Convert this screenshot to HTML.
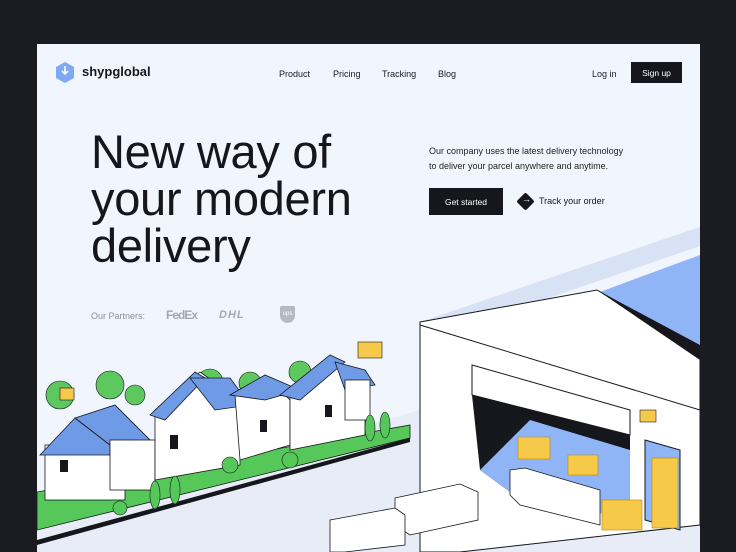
<!DOCTYPE html>
<html><head><meta charset="utf-8"><style>
*{margin:0;padding:0;box-sizing:border-box}
body{width:736px;height:552px;background:#1b1c21;overflow:hidden;font-family:"Liberation Sans",sans-serif;position:relative}
.page{position:absolute;left:37px;top:44px;width:663px;height:508px;background:#f1f5fd;overflow:hidden}
.abs{position:absolute}
.nav a{position:absolute;top:25px;font-size:9px;color:#1a1b20}
h1{position:absolute;left:54px;top:84px;font-size:47px;line-height:47px;font-weight:400;color:#16171c;letter-spacing:-0.3px}
.btn{position:absolute;background:#16171c;color:#fff;font-size:8.5px;display:flex;align-items:center;justify-content:center}
</style></head><body>
<div class="page">
<svg class="abs" style="left:18px;top:18px" width="20" height="22" viewBox="0 0 20 22"><polygon points="10,0 19,5 19,16 10,21 1,16 1,5" fill="#7fa9f4"/><path d="M10 4v8M7 9l3 3 3-3" stroke="#fff" stroke-width="1.6" fill="none"/></svg>
<div class="abs" style="left:45px;top:20px;font-size:13px;font-weight:600;color:#16171c">shypglobal</div>
<div class="nav"><a style="left:242px">Product</a><a style="left:296px">Pricing</a><a style="left:345px">Tracking</a><a style="left:401px">Blog</a><a style="left:555px">Log in</a></div>
<div class="btn" style="left:594px;top:18px;width:51px;height:21px">Sign up</div>
<h1>New way of<br>your modern<br>delivery</h1>
<div class="abs" style="left:392px;top:100px;font-size:9px;line-height:15px;color:#222">Our company uses the latest delivery technology<br>to deliver your parcel anywhere and anytime.</div>
<div class="btn" style="left:392px;top:144px;width:74px;height:27px">Get started</div>
<div class="abs" style="left:482px;top:151px;width:13px;height:13px;background:#16171c;transform:rotate(45deg);border-radius:2px"></div>
<div class="abs" style="left:485px;top:150px;color:#fff;font-size:9px">→</div>
<div class="abs" style="left:502px;top:152px;font-size:9px;color:#16171c">Track your order</div>
<div class="abs" style="left:54px;top:267px;font-size:9px;color:#8a8f99">Our Partners:</div>
<div class="abs" style="left:129px;top:264px;font-size:12px;font-weight:700;color:#a3a8b2;letter-spacing:-1px">FedEx</div>
<div class="abs" style="left:182px;top:265px;font-size:11px;font-weight:700;font-style:italic;color:#a3a8b2;letter-spacing:1px">DHL</div>
<div class="abs" style="left:243px;top:262px;width:15px;height:17px;background:#b5b9c2;border-radius:2px 2px 8px 8px;font-size:6px;color:#fff;text-align:center;line-height:16px">ups</div>
<svg class="abs" style="left:0;top:0" width="663" height="508" viewBox="37 44 663 508">
<polygon points="37,552 37,520 420,410 700,480 700,552" fill="#e7ecf6"/>
<polygon points="420,322 700,227 700,246 470,325" fill="#d7e2f5"/>
<polygon points="600,292 700,255 700,345" fill="#8fb5f7"/>
<polygon points="420,322 597,290 700,350 700,410 420,340" fill="#fff" stroke="#16171c" stroke-width="1"/>
<polygon points="597,290 700,345 700,360" fill="#16171c"/>
<polygon points="420,325 700,410 700,525 460,552 420,552" fill="#fff" stroke="#16171c" stroke-width="1"/>
<polygon points="472,365 630,410 630,435 472,395" fill="#fff" stroke="#16171c"/>
<polygon points="472,395 630,435 630,520 510,492 480,470" fill="#16171c"/>
<polygon points="480,470 530,420 630,450 630,520 510,492" fill="#8fb5f7"/>
<polygon points="645,440 680,450 680,530 645,520" fill="#8fb5f7" stroke="#16171c"/>
<g fill="#f7c948" stroke="#b58a10" stroke-width=".6"><rect x="518" y="437" width="32" height="22"/><rect x="568" y="455" width="30" height="20"/><rect x="652" y="458" width="26" height="70"/><rect x="602" y="500" width="40" height="30"/></g>
<!-- background trees -->
<g fill="#5cc85e" stroke="#16171c" stroke-width=".6"><circle cx="60" cy="395" r="14"/><circle cx="110" cy="385" r="14"/><circle cx="135" cy="395" r="10"/><circle cx="210" cy="382" r="13"/><circle cx="250" cy="383" r="11"/><circle cx="300" cy="372" r="11"/><circle cx="330" cy="368" r="10"/></g>
<!-- lawn -->
<polygon points="37,530 37,492 410,425 410,438" fill="#56c85a" stroke="#16171c" stroke-width=".8"/>
<polygon points="37,540 410,438 410,442 37,545" fill="#16171c"/>
<g stroke="#16171c" stroke-width=".8">
<rect x="45" y="445" width="80" height="55" fill="#fff"/>
<polygon points="40,455 75,418 110,445 110,455" fill="#6f9ae6"/>
<polygon points="75,418 115,405 150,440 110,445" fill="#6f9ae6"/>
<rect x="110" y="440" width="45" height="50" fill="#fff"/>
<polygon points="155,410 200,372 240,400 240,465 155,480" fill="#fff"/>
<polygon points="150,415 195,372 205,378 165,420" fill="#6f9ae6"/>
<polygon points="190,378 230,378 250,405 215,410" fill="#6f9ae6"/>
<polygon points="235,395 275,385 290,400 290,445 240,460" fill="#fff"/>
<polygon points="230,395 265,375 300,390 265,400" fill="#6f9ae6"/>
<polygon points="290,395 330,360 365,385 365,435 290,450" fill="#fff"/>
<polygon points="280,395 330,355 345,362 300,400" fill="#6f9ae6"/>
<polygon points="335,362 365,370 375,385 345,390" fill="#6f9ae6"/>
<rect x="345" y="380" width="25" height="40" fill="#fff"/>
</g>
<g fill="#16171c"><rect x="60" y="460" width="8" height="12"/><rect x="170" y="435" width="8" height="14"/><rect x="260" y="420" width="7" height="12"/><rect x="325" y="405" width="7" height="12"/></g>
<g fill="#56c85a" stroke="#16171c" stroke-width=".6"><ellipse cx="385" cy="425" rx="5" ry="13"/><ellipse cx="370" cy="428" rx="5" ry="13"/><ellipse cx="175" cy="490" rx="5" ry="14"/><ellipse cx="155" cy="495" rx="5" ry="14"/><circle cx="230" cy="465" r="8"/><circle cx="290" cy="460" r="8"/><circle cx="120" cy="508" r="7"/></g>
<g stroke="#16171c" stroke-width=".8" fill="#fff">
<polygon points="395,498 460,484 478,492 478,520 410,535 395,525"/>
<polygon points="330,520 395,508 405,515 405,545 345,552 330,552"/>
<polygon points="510,470 525,468 600,490 600,525 520,505 510,495"/>
</g>
<g fill="#f7c948" stroke="#16171c" stroke-width=".6"><rect x="358" y="342" width="24" height="16"/><rect x="60" y="388" width="14" height="12"/><rect x="640" y="410" width="16" height="12"/></g>
</svg>
</div>
</body></html>
